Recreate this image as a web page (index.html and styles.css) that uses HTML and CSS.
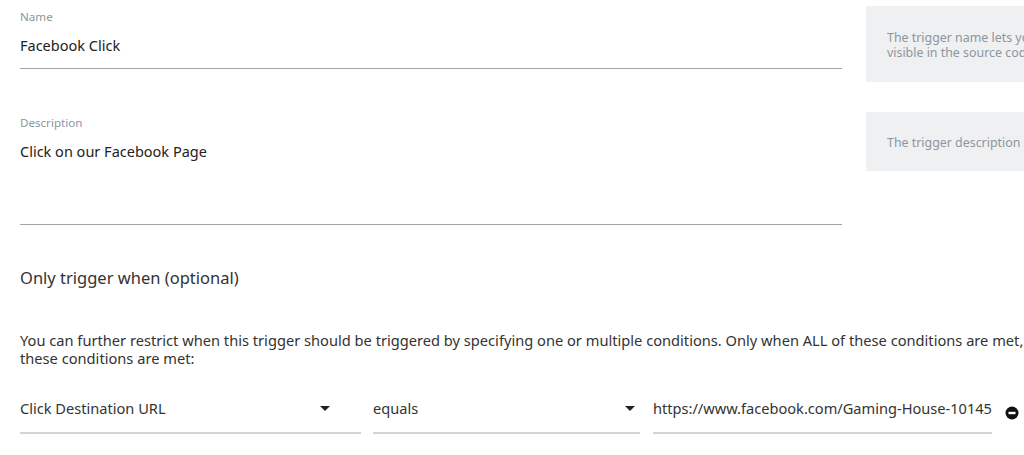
FILE: index.html
```html
<!DOCTYPE html>
<html>
<head>
<meta charset="utf-8">
<link rel="stylesheet" href="styles.css">
</head>
<body>
<div class="page">
  <div class="row">
    <div class="field">
      <div class="label">Name</div>
      <div class="value">Facebook Click</div>
    </div>
    <div class="help help-name">The trigger name lets you identify this trigger. The name will not be<br>visible in the source code.</div>
  </div>
  <div class="row row-desc">
    <div class="field field-desc">
      <div class="label">Description</div>
      <div class="value">Click on our Facebook Page</div>
    </div>
    <div class="help help-desc">The trigger description is optional and only visible to you.</div>
  </div>
  <h2 class="section-title">Only trigger when (optional)</h2>
  <p class="intro">You can further restrict when this trigger should be triggered by specifying one or multiple conditions. Only when ALL of these conditions are met, the trigger will be triggered. The trigger will be triggered only when all of<br>these conditions are met:</p>
  <div class="condition">
    <div class="select select-var"><span>Click Destination URL</span><span class="caret"></span></div>
    <div class="select select-op"><span>equals</span><span class="caret"></span></div>
    <div class="input"><span>https://www.facebook.com/Gaming-House-10145</span></div>
    <svg class="remove" width="14" height="14" viewBox="0 0 14 14"><circle cx="7" cy="7" r="6.5" fill="#111"/><rect x="3.5" y="5.8" width="7" height="2.4" fill="#fff"/></svg>
  </div>
</div>
</body>
</html>
```
FILE: styles.css
```css
html, body {
  margin: 0;
  padding: 0;
  background: #fff;
  overflow: hidden;
}
body {
  font-family: "Noto Sans", "Open Sans", sans-serif;
  color: #222;
  width: 1024px;
  height: 455px;
  overflow: hidden;
}
.page {
  padding: 6px 0 0 20px;
  width: 1400px;
}
.row {
  display: flex;
  align-items: flex-start;
  gap: 24px;
}
.row-desc {
  margin-top: 30px;
}
.field {
  width: 822px;
  border-bottom: 1px solid #a3a3a3;
  padding-top: 4px;
  height: 58px;
}
.field-desc {
  height: 108px;
}
.label {
  font-size: 11.6px;
  line-height: 14px;
  color: #8c959f;
}
.value {
  font-size: 14.5px;
  line-height: 20px;
  margin-top: 11px;
  color: #222;
}
.help {
  background: #eef0f2;
  color: #8e959c;
  font-size: 12.4px;
  line-height: 15px;
  width: 420px;
  box-sizing: border-box;
  padding: 24px 21px;
  white-space: nowrap;
  overflow: hidden;
}
.help-name {
  height: 76px;
}
.help-desc {
  height: 59px;
  padding-top: 23px;
}
.section-title {
  font-size: 16.5px;
  font-weight: normal;
  margin: 42px 0 0;
  line-height: 22px;
  color: #333;
}
.intro {
  font-size: 14.65px;
  line-height: 18px;
  margin: 42px 0 0;
  color: #333;
  white-space: nowrap;
}
.condition {
  display: flex;
  align-items: flex-start;
  margin-top: 31px;
  font-size: 14.6px;
}
.select, .input {
  display: flex;
  align-items: flex-start;
  justify-content: space-between;
  height: 34px;
  line-height: 20px;
  border-bottom: 2px solid #d4d4d4;
  color: #333;
}
.select-var {
  width: 341px;
  margin-right: 12px;
}
.select-op {
  width: 267px;
  margin-right: 13px;
}
.input {
  width: 339px;
  margin-right: 13px;
  white-space: nowrap;
  overflow: hidden;
}
.caret {
  width: 0;
  height: 0;
  border-left: 5px solid transparent;
  border-right: 5px solid transparent;
  border-top: 5px solid #222;
  margin: 8px 31px 0 0;
}
.select-op .caret {
  margin-right: 5px;
}
.remove {
  margin-top: 8px;
  flex-shrink: 0;
}
```
